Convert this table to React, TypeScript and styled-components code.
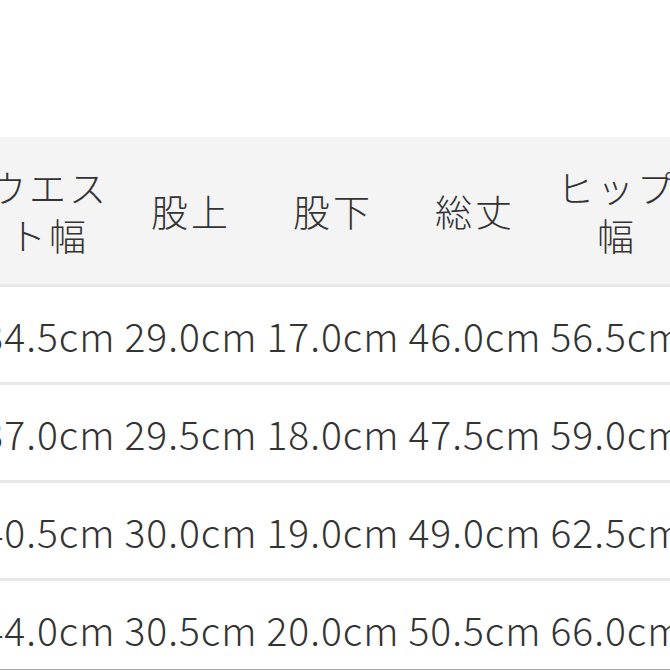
import styled, { createGlobalStyle } from 'styled-components';

const headers = ['ウエスト幅', '股上', '股下', '総丈', 'ヒップ幅'];

const rows = [
    ['34.5cm', '29.0cm', '17.0cm', '46.0cm', '56.5cm'],
    ['37.0cm', '29.5cm', '18.0cm', '47.5cm', '59.0cm'],
    ['40.5cm', '30.0cm', '19.0cm', '49.0cm', '62.5cm'],
    ['44.0cm', '30.5cm', '20.0cm', '50.5cm', '66.0cm'],
];

function App() {
    return (
        <>
            <GlobalStyle />
            <Page>
                <Scroller>
                    <SizeTable>
                        <HeadRow>
                            {headers.map((h) => (
                                <HeadCell key={h}>{h}</HeadCell>
                            ))}
                        </HeadRow>
                        {rows.map((r, i) => (
                            <BodyRow key={i}>
                                {r.map((v, j) => (
                                    <BodyCell key={j}>{v}</BodyCell>
                                ))}
                            </BodyRow>
                        ))}
                    </SizeTable>
                </Scroller>
            </Page>
        </>
    );
}

const GlobalStyle = createGlobalStyle`
    html, body {
        margin: 0;
        padding: 0;
        background: #ffffff;
    }
    body {
        font-family: "Noto Sans CJK JP", "Noto Sans", sans-serif;
        color: #333333;
    }
`;

const Page = styled.div`
    width: 670px;
    height: 670px;
    overflow: hidden;
    padding-top: 137px;
    box-sizing: border-box;
    border-bottom: 1px solid #a8a8a8;
`;

const Scroller = styled.div`
    width: 100%;
    overflow: hidden;
`;

const SizeTable = styled.div`
    width: 710px;
    margin-left: -22px;
`;

const HeadRow = styled.div`
    display: grid;
    grid-template-columns: repeat(5, 142px);
    height: 147px;
    background: #f4f4f4;
    border-bottom: 3px solid #e6e6e6;
`;

const BodyRow = styled.div`
    display: grid;
    grid-template-columns: repeat(5, 142px);
    height: 95px;
    border-bottom: 3px solid #e8e8e8;
`;

const HeadCell = styled.div`
    display: flex;
    align-items: center;
    justify-content: center;
    padding: 0 10px;
    text-align: center;
    font-size: 37px;
    font-weight: 300;
    line-height: 48px;
    letter-spacing: 3px;
    color: #333333;
`;

const BodyCell = styled.div`
    display: flex;
    align-items: center;
    justify-content: center;
    white-space: nowrap;
    font-size: 39px;
    font-weight: 300;
    letter-spacing: 1px;
    color: #333333;
`;

export default App;
